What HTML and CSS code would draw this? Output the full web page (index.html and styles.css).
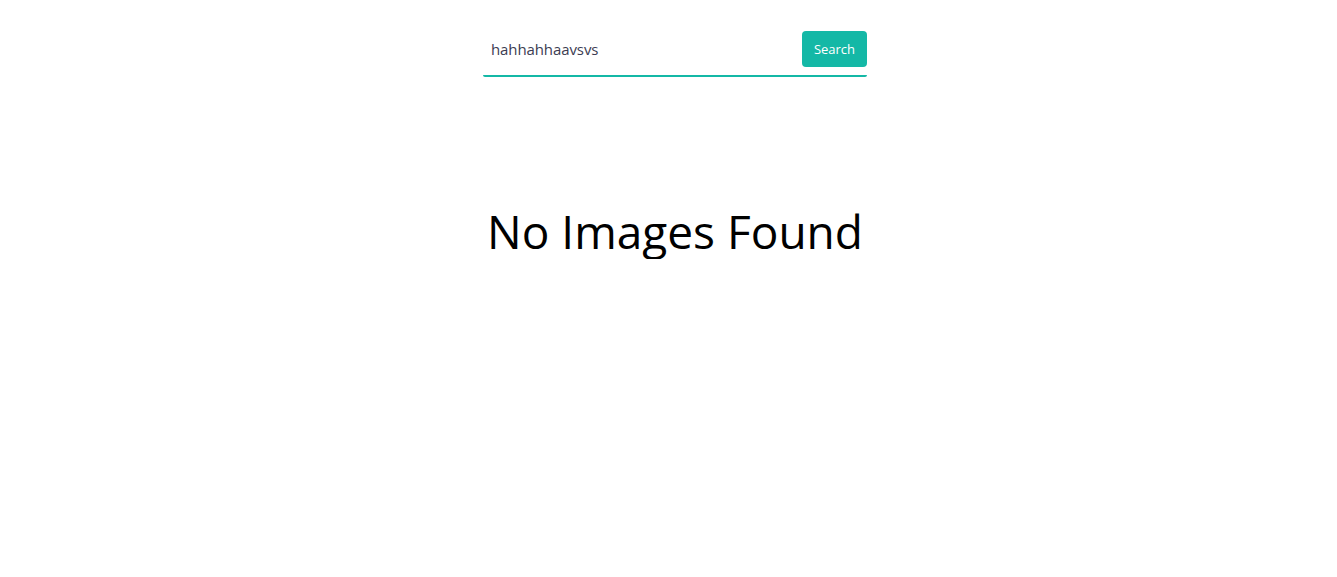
FILE: index.html
```html
<!DOCTYPE html>
<html lang="en">
<head>
<meta charset="utf-8">
<title>Image Search</title>
<link rel="stylesheet" href="styles.css">
</head>
<body>
<main class="page">
  <form class="search-form">
    <input class="search-input" type="text" value="hahhahhaavsvs">
    <button class="search-btn" type="button">Search</button>
  </form>
  <h1 class="empty">No Images Found</h1>
</main>
</body>
</html>
```
FILE: styles.css
```css
* { box-sizing: border-box; }
body {
  margin: 0;
  background: #fff;
  font-family: "Open Sans", "Noto Sans", sans-serif;
}
.page {
  padding: 31px 0 0 13px;
}
.search-form {
  display: flex;
  align-items: center;
  width: 384px;
  margin: 0 auto;
  padding-bottom: 8px;
  border-bottom: 2px solid #14b8a6;
  border-radius: 2px;
}
.search-input {
  flex: 1;
  height: 36px;
  border: none;
  outline: none;
  padding: 0 8px;
  font-family: inherit;
  font-size: 15px;
  letter-spacing: -0.1px;
  color: #3c3c52;
  background: transparent;
}
.search-btn {
  width: 65px;
  height: 36px;
  border: none;
  border-radius: 4px;
  background: #14b8a6;
  color: #fff;
  font-family: inherit;
  font-size: 13px;
  padding: 0;
}
.empty {
  margin: 127px 0 0;
  text-align: center;
  font-weight: 400;
  font-size: 46px;
  line-height: 1.2;
  color: #000;
  letter-spacing: 0;
}
```
